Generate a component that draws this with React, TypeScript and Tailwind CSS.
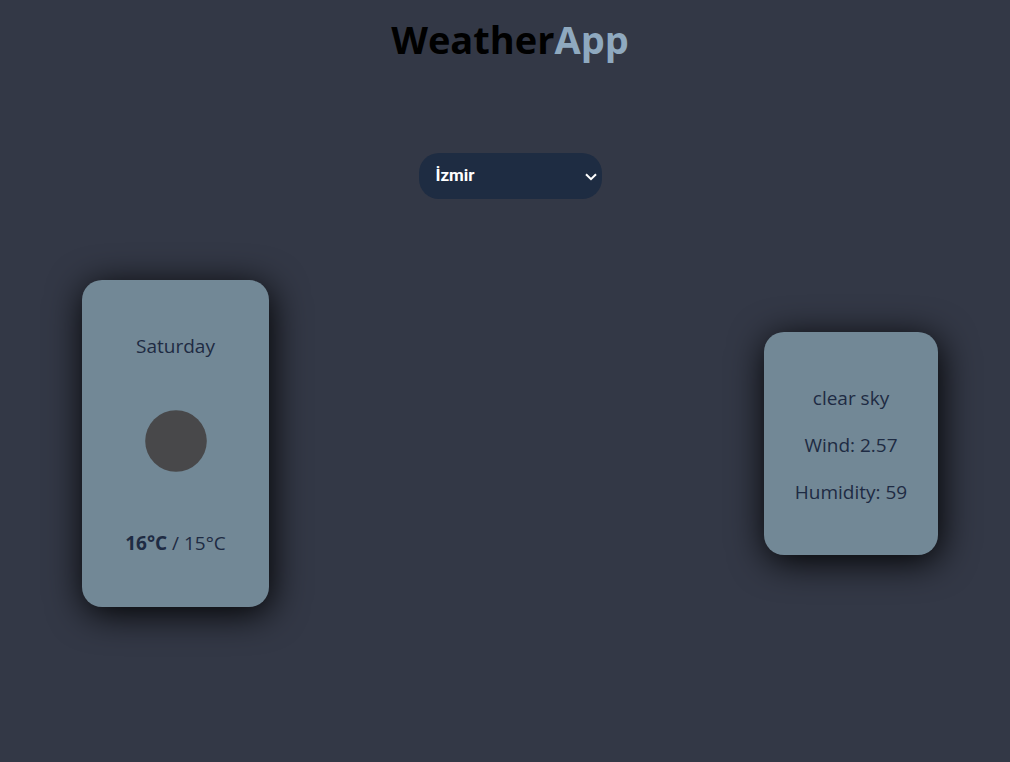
import { useState } from "react";

const cities = ["İzmir", "İstanbul", "Ankara", "Antalya", "Bursa"];

const cardClass =
  "flex flex-col items-center rounded-[20px] bg-[#728896] text-[19px] leading-[27px] text-[#1e2b43] shadow-[2px_6px_36px_rgba(0,0,0,0.98)]";

function Header() {
  return (
    <h1 className="text-center text-[38px] leading-[52px] font-bold text-black">
      Weather<span className="text-[#8fa9bf]">App</span>
    </h1>
  );
}

function CitySelect() {
  const [city, setCity] = useState(cities[0]);
  return (
    <div className="relative w-[183px]">
      <select
        aria-label="City"
        value={city}
        onChange={(e) => setCity(e.target.value)}
        className="h-[46px] w-full appearance-none rounded-[20px] bg-[#1e2c42] pr-6 pb-px pl-[17px] font-['Roboto',sans-serif] text-[17px] font-bold text-white outline-none"
      >
        {cities.map((name) => (
          <option key={name}>{name}</option>
        ))}
      </select>
      <svg
        aria-hidden="true"
        viewBox="0 0 12 8"
        className="pointer-events-none absolute top-5 right-[5px] h-2 w-3"
        fill="none"
        stroke="white"
        strokeWidth="2"
      >
        <path d="M1 1.2 6 6.2 11 1.2" />
      </svg>
    </div>
  );
}

function DayCard() {
  return (
    <section className={`${cardClass} h-[327px] w-[187px] pt-[53px]`}>
      <p>Saturday</p>
      <svg aria-hidden="true" viewBox="0 0 62 62" className="mt-[50px] size-[62px]">
        <circle cx="31" cy="31" r="30.8" fill="#48484a" />
      </svg>
      <p className="mt-[58px]">
        <b>16°C</b> / 15°C
      </p>
    </section>
  );
}

function DetailsCard() {
  return (
    <section className={`${cardClass} h-[223px] w-[174px] gap-5 pt-[53px]`}>
      <p>clear sky</p>
      <p>Wind: 2.57</p>
      <p>Humidity: 59</p>
    </section>
  );
}

export default function App() {
  return (
    <div className="min-h-screen bg-[#333846] pt-[13px] pl-[10px] font-['Open_Sans','Noto_Sans',sans-serif]">
      <Header />
      <div className="mt-[88px] flex justify-center">
        <CitySelect />
      </div>
      <main className="mt-[81px] flex items-center justify-between px-[72px]">
        <DayCard />
        <DetailsCard />
      </main>
    </div>
  );
}
